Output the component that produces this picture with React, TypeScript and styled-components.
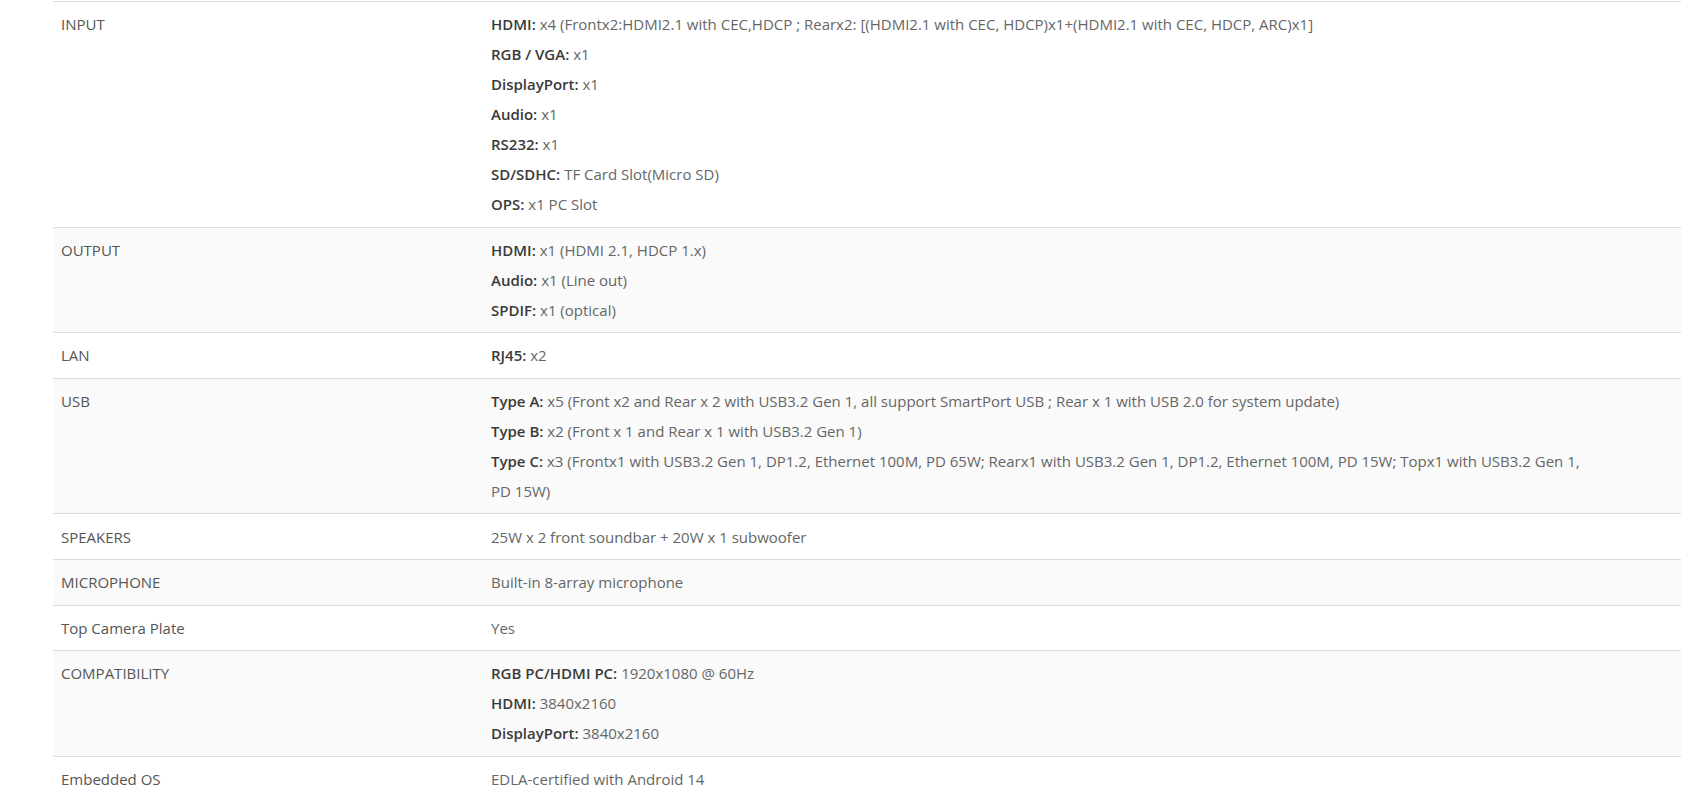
import styled, { createGlobalStyle } from "styled-components";

type Part = { label?: string; text: string };
type Spec = { name: string; lines: Part[][] };

const specs: Spec[] = [
  {
    name: "INPUT",
    lines: [
      [
        {
          label: "HDMI:",
          text: " x4 (Frontx2:HDMI2.1 with CEC,HDCP ; Rearx2: [(HDMI2.1 with CEC, HDCP)x1+(HDMI2.1 with CEC, HDCP, ARC)x1]",
        },
      ],
      [{ label: "RGB / VGA:", text: " x1" }],
      [{ label: "DisplayPort:", text: " x1" }],
      [{ label: "Audio:", text: " x1" }],
      [{ label: "RS232:", text: " x1" }],
      [{ label: "SD/SDHC:", text: " TF Card Slot(Micro SD)" }],
      [{ label: "OPS:", text: " x1 PC Slot" }],
    ],
  },
  {
    name: "OUTPUT",
    lines: [
      [{ label: "HDMI:", text: " x1 (HDMI 2.1, HDCP 1.x)" }],
      [{ label: "Audio:", text: " x1 (Line out)" }],
      [{ label: "SPDIF:", text: " x1 (optical)" }],
    ],
  },
  { name: "LAN", lines: [[{ label: "RJ45:", text: " x2" }]] },
  {
    name: "USB",
    lines: [
      [
        {
          label: "Type A:",
          text: " x5 (Front x2 and Rear x 2 with USB3.2 Gen 1, all support SmartPort USB ; Rear x 1 with USB 2.0 for system update)",
        },
      ],
      [{ label: "Type B:", text: " x2 (Front x 1 and Rear x 1 with USB3.2 Gen 1)" }],
      [
        {
          label: "Type C:",
          text: " x3 (Frontx1 with USB3.2 Gen 1, DP1.2, Ethernet 100M, PD 65W; Rearx1 with USB3.2 Gen 1, DP1.2, Ethernet 100M, PD 15W; Topx1 with USB3.2 Gen 1, PD 15W)",
        },
      ],
    ],
  },
  { name: "SPEAKERS", lines: [[{ text: "25W x 2 front soundbar + 20W x 1 subwoofer" }]] },
  { name: "MICROPHONE", lines: [[{ text: "Built-in 8-array microphone" }]] },
  { name: "Top Camera Plate", lines: [[{ text: "Yes" }]] },
  {
    name: "COMPATIBILITY",
    lines: [
      [{ label: "RGB PC/HDMI PC:", text: " 1920x1080 @ 60Hz" }],
      [{ label: "HDMI:", text: " 3840x2160" }],
      [{ label: "DisplayPort:", text: " 3840x2160" }],
    ],
  },
  { name: "Embedded OS", lines: [[{ text: "EDLA-certified with Android 14" }]] },
];

const GlobalStyle = createGlobalStyle`
  html, body {
    margin: 0;
    background: #ffffff;
  }
  body {
    font-family: "Open Sans", "Liberation Sans", sans-serif;
    font-size: 15px;
    color: #666666;
  }
`;

const Page = styled.div`
  padding: 1px 0 0 53px;
  height: 797px;
  overflow: hidden;
`;

const Table = styled.table`
  width: 1667px;
  border-collapse: collapse;
  table-layout: fixed;
`;

const Row = styled.tr<{ $shaded: boolean }>`
  background: ${(p) => (p.$shaded ? "#fafafa" : "#ffffff")};
  border-top: 1px solid #dddddd;
`;

const NameCell = styled.td`
  width: 414px;
  padding: 7.3px 8px;
  vertical-align: top;
  line-height: 30px;
  color: #555555;
`;

const ValueCell = styled.td`
  padding: 7.3px 130px 7.3px 8px;
  vertical-align: top;
  line-height: 30px;
  color: #666666;
`;

const Key = styled.strong`
  font-weight: 600;
  color: #3a3a3a;
`;

export default function App() {
  return (
    <>
      <GlobalStyle />
      <Page>
        <Table>
          <tbody>
            {specs.map((spec, i) => (
              <Row key={spec.name} $shaded={i % 2 === 1}>
                <NameCell>{spec.name}</NameCell>
                <ValueCell>
                  {spec.lines.map((line, j) => (
                    <div key={j}>
                      {line.map((part, k) => (
                        <span key={k}>
                          {part.label && <Key>{part.label}</Key>}
                          {part.text}
                        </span>
                      ))}
                    </div>
                  ))}
                </ValueCell>
              </Row>
            ))}
          </tbody>
        </Table>
      </Page>
    </>
  );
}
